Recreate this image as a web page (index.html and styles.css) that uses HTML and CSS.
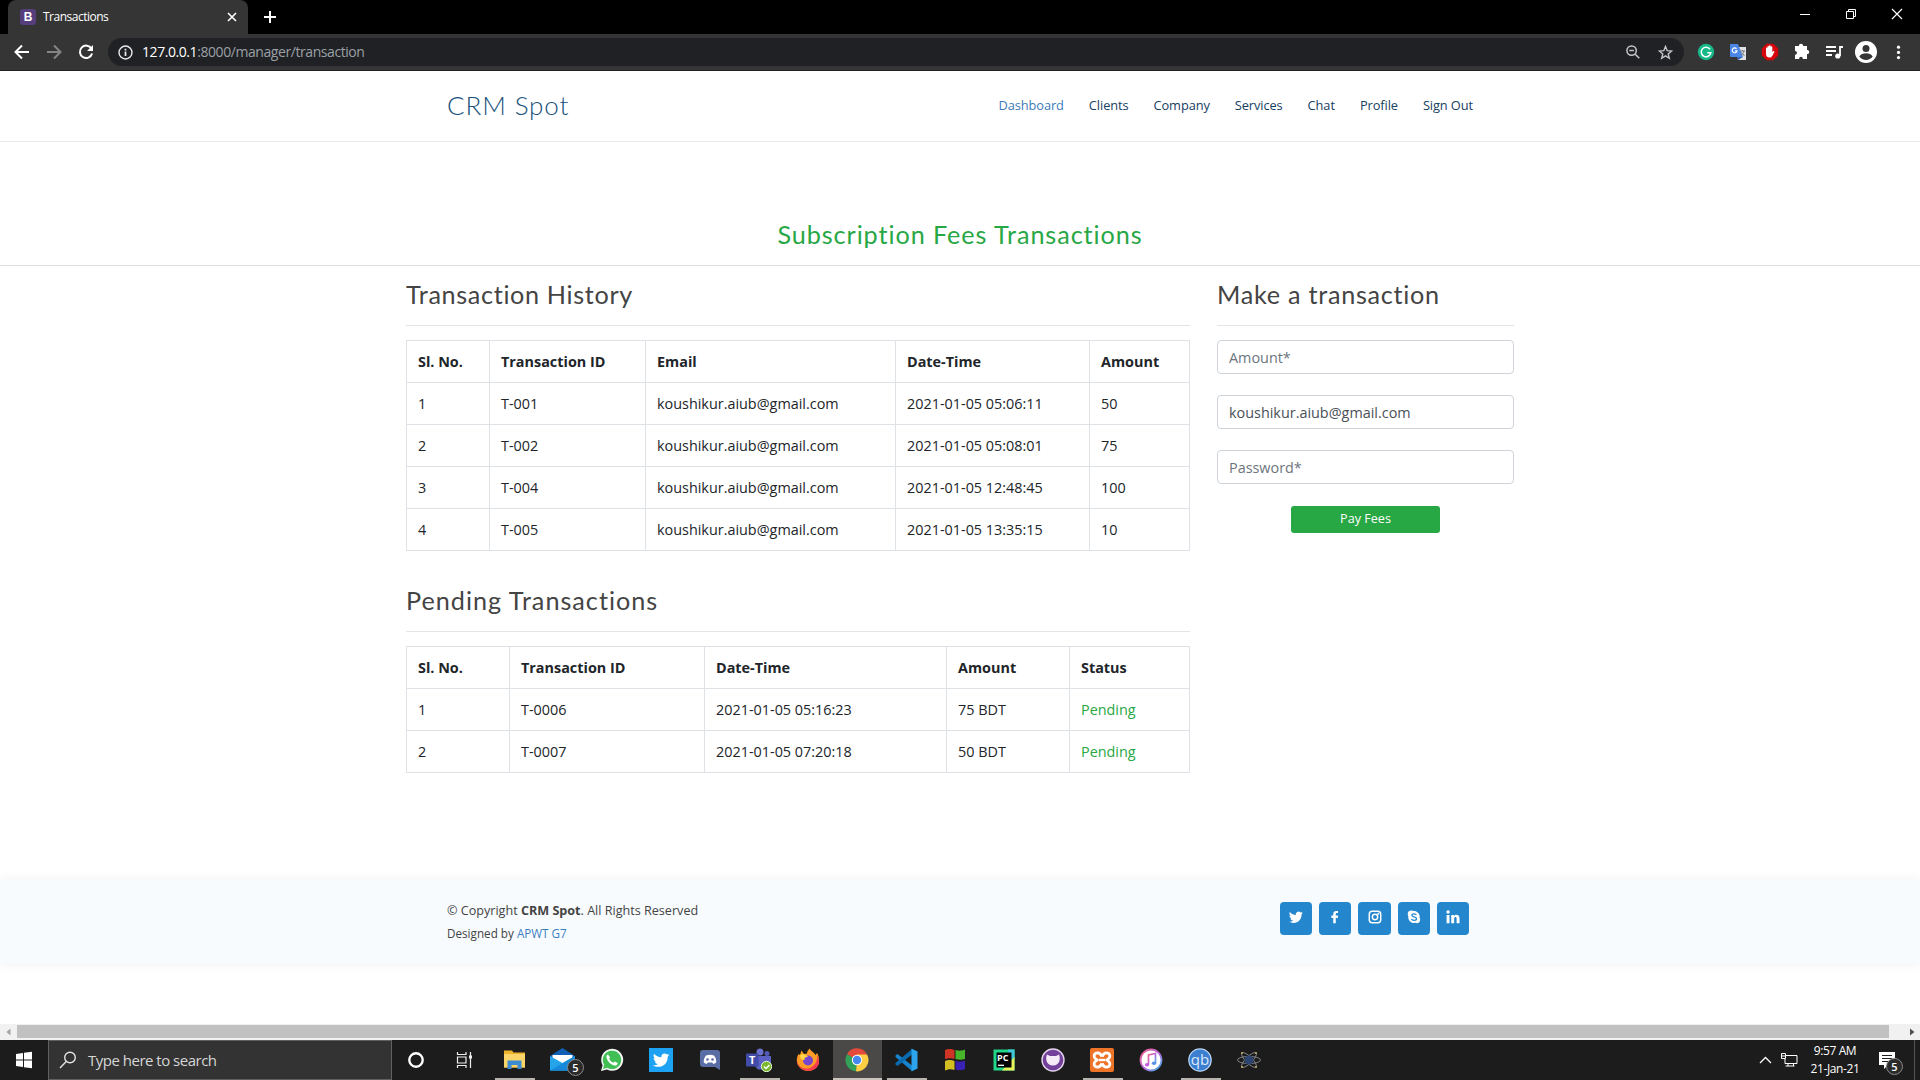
FILE: index.html
```html
<!DOCTYPE html>
<html lang="en">
<head>
<meta charset="utf-8">
<title>Transactions</title>
<link rel="stylesheet" href="styles.css">
</head>
<body>
<div class="tabstrip">
  <div class="tab">
    <span class="favicon">B</span>
    <span class="tab-title">Transactions</span>
    <svg class="tab-close" width="10" height="10" viewBox="0 0 10 10"><path d="M1 1l8 8M9 1l-8 8" stroke="#fff" stroke-width="1.6"/></svg>
  </div>
  <svg class="new-tab" width="14" height="14" viewBox="0 0 14 14"><path d="M7 1v12M1 7h12" stroke="#fff" stroke-width="2"/></svg>
  <div class="window-controls">
    <svg width="12" height="12" viewBox="0 0 12 12"><path d="M1 6.5h10" stroke="#fff"/></svg>
    <svg width="12" height="12" viewBox="0 0 12 12"><path d="M1.5 3.5h7v7h-7zM3.5 3.5v-2h7v7h-2" fill="none" stroke="#fff"/></svg>
    <svg width="12" height="12" viewBox="0 0 12 12"><path d="M1 1l10 10M11 1L1 11" stroke="#fff" stroke-width="1.2"/></svg>
  </div>
</div>
<div class="toolbar">
  <div class="nav-buttons">
    <svg width="16" height="16" viewBox="0 0 16 16"><path d="M15 8H2M8 1.5L1.5 8 8 14.5" fill="none" stroke="#fff" stroke-width="2"/></svg>
    <svg width="16" height="16" viewBox="0 0 16 16"><path d="M1 8h13M8 1.5L14.500 8 8 14.500" fill="none" stroke="#858585" stroke-width="2"/></svg>
    <svg width="16" height="16" viewBox="0 0 16 16"><path d="M13.500 4.700A6.200 6.200 0 1 0 14.100 9.500" fill="none" stroke="#fff" stroke-width="2"/><path d="M15 1v6H9z" fill="#fff"/></svg>
  </div>
  <div class="omnibox">
    <svg class="info" width="15" height="15" viewBox="0 0 15 15"><circle cx="7.500" cy="7.500" r="6.500" fill="none" stroke="#e8eaed" stroke-width="1.400"/><path d="M7.500 6.500v4.500M7.500 3.800v1.700" stroke="#e8eaed" stroke-width="1.700"/></svg>
    <span class="url"><b>127.0.0.1</b>:8000/manager/transaction</span>
    <svg class="zoom" width="14" height="14" viewBox="0 0 14 14"><path d="M9.200 9.200L13.300 13.300M3.300 5.600h4.600" stroke="#c4c6c9" stroke-width="1.500"/><circle cx="5.600" cy="5.600" r="4.700" fill="none" stroke="#c4c6c9" stroke-width="1.500"/></svg>
    <svg width="15" height="15" viewBox="0 0 15 15"><path d="M7.500 1.500l1.700 4.200 4.500.3-3.500 2.900 1.100 4.400-3.800-2.400-3.800 2.400 1.100-4.400L1.300 6l4.500-.3z" fill="none" stroke="#c4c6c9" stroke-width="1.400"/></svg>
  </div>
  <div class="extensions">
    <svg width="32" height="24" viewBox="0 0 32 24"><circle cx="16" cy="12" r="8.200" fill="#15b886"/><path d="M20 9.200A4.800 4.800 0 1 0 20.800 12.800h-3.500" fill="none" stroke="#fff" stroke-width="1.500"/></svg>
    <svg width="32" height="24" viewBox="0 0 32 24"><path d="M14 7h10v13h-8z" fill="#dfe1e5"/><path d="M8 4h8l5 13H9a1 1 0 0 1-1-1z" fill="#4a86e8"/><path d="M16 20l5-3h-6z" fill="#3162b5"/><path d="M14.500 8.800a2.400 2.400 0 1 0 .5 2H13" fill="none" stroke="#fff" stroke-width="1.200"/><path d="M18 11h5M20.500 10v1M22 11c-.5 2-2 4-3.200 4.500M19.500 12.500l3 3.500" stroke="#75797e" fill="none"/></svg>
    <svg width="32" height="24" viewBox="0 0 32 24"><path d="M12.600 3.800h6.800l4.800 4.800v6.800l-4.800 4.800h-6.800l-4.800-4.800V8.600z" fill="#d5060d"/><path d="M12 13.500V8.200c0-1 1.400-1 1.400 0v-1.400c0-1 1.600-1 1.600 0v-.7c0-1 1.700-1 1.700 0v1c0-1 1.600-1 1.600 0v5c1-1.700 2.600-1.400 2-.2-1.700 3.300-2.300 5.600-4.700 5.600-2.600 0-3.600-1.500-3.600-4z" fill="#fff"/></svg>
    <svg width="32" height="24" viewBox="0 0 32 24"><path d="M9 6h4c-.6-3 4.600-3 4 0h4v4c3-.4 3 4.400 0 4v5h-4.200c.3-3-3.900-3-3.600 0H9v-4.300c2.600.3 2.600-4 0-3.700z" fill="#fff"/></svg>
    <svg width="32" height="24" viewBox="0 0 32 24"><path d="M8 7h10M8 11h10M8 15h6M22 16V7h3" fill="none" stroke="#fff" stroke-width="1.800"/><circle cx="19.800" cy="16" r="2.600" fill="#fff"/></svg>
    <svg width="32" height="24" viewBox="0 0 32 24"><circle cx="16" cy="12" r="11" fill="#fff"/><circle cx="16" cy="8.400" r="3.500" fill="#353535"/><path d="M9.300 16.500c2.500-4.300 10.900-4.300 13.400 0-3 4.600-10.400 4.600-13.400 0z" fill="#353535"/></svg>
    <svg width="32" height="24" viewBox="0 0 32 24"><g fill="#fff"><circle cx="16.500" cy="7.200" r="1.600"/><circle cx="16.500" cy="12.400" r="1.600"/><circle cx="16.500" cy="17.600" r="1.600"/></g></svg>
  </div>
</div>

<div class="page">
  <header class="site-header">
    <div class="container">
      <a class="logo">CRM Spot</a>
      <nav class="menu">
        <a class="active">Dashboard</a><a>Clients</a><a>Company</a><a>Services</a><a>Chat</a><a>Profile</a><a>Sign Out</a>
      </nav>
    </div>
  </header>
  <h2 class="page-title">Subscription Fees Transactions</h2>
  <main class="content">
    <div class="lists">
      <section class="block">
        <h3 class="history-title">Transaction History</h3>
        <table class="history">
          <colgroup><col><col><col><col><col></colgroup>
          <tr><th>Sl. No.</th><th>Transaction ID</th><th>Email</th><th>Date-Time</th><th>Amount</th></tr>
          <tr><td>1</td><td>T-001</td><td>koushikur.aiub@gmail.com</td><td>2021-01-05 05:06:11</td><td>50</td></tr>
          <tr><td>2</td><td>T-002</td><td>koushikur.aiub@gmail.com</td><td>2021-01-05 05:08:01</td><td>75</td></tr>
          <tr><td>3</td><td>T-004</td><td>koushikur.aiub@gmail.com</td><td>2021-01-05 12:48:45</td><td>100</td></tr>
          <tr><td>4</td><td>T-005</td><td>koushikur.aiub@gmail.com</td><td>2021-01-05 13:35:15</td><td>10</td></tr>
        </table>
      </section>
      <section class="block">
        <h3 class="pending-title">Pending Transactions</h3>
        <table class="pending">
          <colgroup><col><col><col><col><col></colgroup>
          <tr><th>Sl. No.</th><th>Transaction ID</th><th>Date-Time</th><th>Amount</th><th>Status</th></tr>
          <tr><td>1</td><td>T-0006</td><td>2021-01-05 05:16:23</td><td>75 BDT</td><td class="status">Pending</td></tr>
          <tr><td>2</td><td>T-0007</td><td>2021-01-05 07:20:18</td><td>50 BDT</td><td class="status">Pending</td></tr>
        </table>
      </section>
    </div>
    <form class="pay">
      <h3 class="pay-title">Make a transaction</h3>
      <input type="text" placeholder="Amount*">
      <input type="text" value="koushikur.aiub@gmail.com">
      <input type="password" placeholder="Password*">
      <button type="button">Pay Fees</button>
    </form>
  </main>
  <footer class="footer">
    <div class="container">
      <div class="credits">
        <div class="copyright">© Copyright <strong>CRM Spot</strong>. All Rights Reserved</div>
        <div class="designed">Designed by <a>APWT G7</a></div>
      </div>
      <div class="social">
        <a><svg width="14" height="14" viewBox="0 0 24 24"><path d="M23.600 4.900c-.9.400-1.800.6-2.800.8 1-.6 1.800-1.600 2.100-2.700-.9.600-2 1-3.100 1.200A4.900 4.900 0 0 0 11.500 8.600C7.400 8.400 3.800 6.500 1.400 3.500c-1.300 2.200-.7 5.100 1.500 6.600-.8 0-1.600-.2-2.200-.6 0 2.400 1.600 4.500 3.900 4.900-.7.200-1.500.2-2.200.1.600 2 2.400 3.300 4.600 3.400A9.900 9.900 0 0 1 0 19.900c2.200 1.400 4.700 2.200 7.500 2.200 9.100 0 14.300-7.700 14-14.600.9-.7 1.600-1.600 2.100-2.600z" fill="#fff"/></svg></a>
        <a><svg width="14" height="14" viewBox="0 0 24 24"><path d="M9 22.500v-9H5.800V9.400H9V6.700C9 3.400 11 1.600 13.900 1.600h3.400v3.700h-2.100c-1.500 0-1.900.8-1.900 1.900v2.200h4l-.6 4.100h-3.400v9z" fill="#fff"/></svg></a>
        <a><svg width="14" height="14" viewBox="0 0 24 24"><rect x="2.200" y="2.200" width="19.600" height="19.600" rx="5" fill="none" stroke="#fff" stroke-width="2.500"/><circle cx="12" cy="12" r="4.600" fill="none" stroke="#fff" stroke-width="2.500"/><circle cx="17.700" cy="6.300" r="1.700" fill="#fff"/></svg></a>
        <a><svg width="14" height="14" viewBox="0 0 24 24"><path d="M7 1c2 0 3 .7 4 .7 6.500-.5 11.800 5.500 10.600 11.500 3.200 5-1.800 11.300-7.300 8.700C7 23.300 1.300 17.500 2.300 10.700-.2 6.200 2 1 7 1z" fill="#fff"/><path d="M16 8.600C15 6 8.300 5.800 8.300 9c0 3.500 8 2 8 6 0 3.600-7.600 3.500-8.700.2" fill="none" stroke="#2487ce" stroke-width="2.300"/></svg></a>
        <a><svg width="14" height="14" viewBox="0 0 24 24"><circle cx="3.500" cy="3.500" r="2.900" fill="#fff"/><path d="M1 8.500h5v14H1zM9 8.500h4.700v2c2.300-4 9.500-3.200 9.500 3.500v8.500h-5v-7.300c0-4.300-4.200-4-4.200 0v7.300H9z" fill="#fff"/></svg></a>
      </div>
    </div>
  </footer>
</div>

<div class="hscroll">
  <svg width="17" height="16" viewBox="0 0 17 16"><path d="M10.500 4.500v7L6.500 8z" fill="#a3a3a3"/></svg>
  <div class="thumb"></div>
  <svg width="31" height="16" viewBox="0 0 31 16"><path d="M21 4.500v7l4.500-3.500z" fill="#505050"/></svg>
</div>

<div class="taskbar">
  <div class="start"><svg width="18" height="18" viewBox="0 0 18 18"><path d="M1 3l7-1v6.500H1zM9 1.800l8-1.100v7.800H9zM1 9.500h7V16l-7-1zM9 9.500h8v7.800l-8-1.100z" fill="#fff"/></svg></div>
  <div class="search"><svg width="18" height="18" viewBox="0 0 18 18"><circle cx="11" cy="6.500" r="5.300" fill="none" stroke="#e4e4e4" stroke-width="1.400"/><path d="M7.200 10.500L1 17" stroke="#e4e4e4" stroke-width="1.400"/></svg><span>Type here to search</span></div>
  <div class="apps">
    <div><svg width="24" height="24" viewBox="0 0 24 24"><circle cx="12" cy="12" r="6.700" fill="none" stroke="#fff" stroke-width="2.400"/></svg></div>
    <div><svg width="24" height="24" viewBox="0 0 24 24"><path d="M4.500 4v2.500h8.500V4M4.500 20v-2.500h8.500V20M4.500 9h8.500v6H4.500zM17.500 4v16" fill="none" stroke="#eee" stroke-width="1.200"/><path d="M16 7.500h3v3h-3z" fill="#eee"/></svg></div>
    <div class="open more"><svg width="24" height="24" viewBox="0 0 24 24"><path d="M2 2.500h8l1.500 2H23v15H2z" fill="#eeb32b"/><path d="M2 6h21v13.500H2z" fill="#fbd569"/><path d="M5.500 21v-8.500h14V21h-4v-4h-6v4z" fill="#3d8cd2"/></svg></div>
    <div class="mail"><svg width="26" height="24" viewBox="0 0 26 24"><path d="M0 8L12.500 0 25 8v14.500H0z" fill="#0f5fb4"/><path d="M2.500 7h20v9h-20z" fill="#fff"/><path d="M0 8l12.500 7L25 8v14.500H0z" fill="#26a4ea"/><path d="M0 22.500L25 8v14.500z" fill="#1789d8"/></svg><span class="badge">5</span></div>
    <div><svg width="24" height="24" viewBox="0 0 24 24"><path d="M1 23l1.600-5.800A11 11 0 1 1 7 21.500z" fill="#f1f6f1"/><path d="M3 21l1.200-4.200A9.200 9.200 0 1 1 7.300 19.800z" fill="#41bf55"/><path d="M8 6.500c-1.300.3-1.900 2-1.400 3.400 1.200 3.700 4.200 6.800 8.100 7.600 1.600.2 3-.8 3-2.600l-3-1.500-1.300 1.300c-2-.8-3.400-2.200-4.300-4l1-1.300z" fill="#fff"/></svg></div>
    <div><svg width="24" height="24" viewBox="0 0 24 24"><path d="M0 0h24v24H0z" fill="#1da1f2"/><path d="M20.500 7l-1.800.6 1.400-1.800-2 .7c-2.500-2.300-6.200-.4-5.700 2.800-3 0-5.500-1.400-7.300-3.600-1 1.800-.5 3.700 1 4.700l-1.500-.4c0 1.700 1.100 3 2.600 3.500h-1.500c.5 1.400 1.600 2.200 3.200 2.400-1.600 1.200-3.200 1.600-5.200 1.400 6.500 3.800 15.200.6 15-8.500z" fill="#fff"/></svg></div>
    <div><svg width="22" height="24" viewBox="0 0 22 24"><path d="M4 2h14a3 3 0 0 1 3 3v17l-5-3H4a3 3 0 0 1-3-3V5a3 3 0 0 1 3-3z" fill="#5a6da5"/><path d="M7 7.500c2.600-1 5.400-1 8 0 1.800 2.300 2.500 4.600 2.200 7-1 .8-2 1.200-3 1.400l-.9-1.400h-4.600l-.9 1.400c-1-.2-2-.6-3-1.400-.3-2.400.4-4.700 2.200-7z" fill="#fff"/><circle cx="8.500" cy="11.500" r="1.300" fill="#5a6da5"/><circle cx="13.500" cy="11.500" r="1.300" fill="#5a6da5"/></svg></div>
    <div class="open"><svg width="26" height="24" viewBox="0 0 26 24"><circle cx="14" cy="4" r="3.500" fill="#6b72d0"/><circle cx="21" cy="5.500" r="2.500" fill="#5359b8"/><path d="M9 8h16v8a6 6 0 0 1-7 5.500H12a6 6 0 0 1-3-5z" fill="#5b62c4"/><rect x="0" y="5.500" width="12.500" height="13" rx="1" fill="#414ba8"/><text x="3" y="16" class="glyph-t">T</text><circle cx="20.500" cy="18.500" r="5.200" fill="#7cb82f" stroke="#e9f4dc"/><path d="M18 18.500l2 2 3.500-3.500" fill="none" stroke="#fff" stroke-width="1.500"/></svg></div>
    <div><svg width="24" height="24" viewBox="0 0 24 24"><path d="M2.500 6l1.500 1L5.500 2.500 8 6l3-.5C11 2.500 14 .5 14 .5 14 3 18 4 19.500 7l1.500-2c3 5 2.600 10.500-.3 14-4.200 5-12.500 5.300-17 .5C-.2 15.200.3 10.300 2.500 6z" fill="#ff9c25"/><path d="M1 11.500c.2 7.800 8 10.800 13.500 8.200 5-2.400 7.300-7.300 6.500-12.700 3 5 2.600 9.500-.3 12.500-4.200 4.600-12.500 4.500-17-.2C1.500 17 .7 14.500 1 11.500z" fill="#f83b4d"/><circle cx="12" cy="12.500" r="5" fill="#7646cf"/><path d="M4 7c3-1.500 6-1 8 2-3 0-4.500 1.500-3 3-3.500 0-5-2-5-5z" fill="#ffd744"/></svg></div>
    <div class="open current"><svg width="24" height="24" viewBox="0 0 24 24"><path d="M12 12L2 6.300A11.300 11.300 0 0 1 22 6.500z" fill="#e24a3b"/><path d="M12 12L2 6.300A11.300 11.300 0 0 0 11 23.300z" fill="#33a157"/><path d="M12 12l-1 11.300A11.300 11.300 0 0 0 22 6.500H12z" fill="#ffce42"/><circle cx="12" cy="12" r="5.200" fill="#fff"/><circle cx="12" cy="12" r="4.200" fill="#4688f1"/></svg></div>
    <div class="open more"><svg width="24" height="24" viewBox="0 0 24 24"><path d="M1.500 7.500l2-1.500L18 17.500V23L1.500 9z" fill="#1684cf"/><path d="M1.500 16.500l2 1.500L18 6.500V1L1.500 15z" fill="#0b6bb0"/><path d="M17.500.500L23.500 3.500v17l-6 3z" fill="#2da3ec"/></svg></div>
    <div><svg width="24" height="24" viewBox="0 0 24 24"><path d="M2 2c4-1.500 6-1 9.500 0v9C8 10 6 10 2 11z" fill="#cf3425"/><path d="M12.500 2c3.500 1 6 1 9.500-.5V11c-3.500 1-6 1-9.500 0z" fill="#47b62b"/><path d="M2 13c4-1.500 6-1 9.500 0v9C8 21 6 21 2 22.500z" fill="#d4bf23"/><path d="M12.500 13c3.500 1 6 1 9.500-.5V21c-3.500 1.500-6 1.500-9.500.5z" fill="#3922b5"/></svg></div>
    <div><svg width="24" height="24" viewBox="0 0 24 24"><path d="M1.500 1.500h21v21h-21z" fill="#21d789"/><path d="M16 1.500h6.500V10l-6.500 4z" fill="#42c7d8"/><path d="M22.500 9v13.500H10z" fill="#e8f05a"/><path d="M4.500 4.500h15v15h-15z" fill="#000"/><text x="5" y="12.500" class="glyph-pc">PC</text><path d="M6 17.300h6" stroke="#fff" stroke-width="1.300"/></svg></div>
    <div><svg width="24" height="24" viewBox="0 0 24 24"><circle cx="12" cy="12" r="11" fill="#73409a" stroke="#e4d4ec" stroke-width="1.400"/><path d="M6 6.500l3 1.600h6l3-1.600c1.700 4 1 11-6 11s-7.700-7-6-11z" fill="#f5ecf8"/></svg></div>
    <div class="open"><svg width="24" height="24" viewBox="0 0 24 24"><rect width="24" height="24" rx="2" fill="#ee742a"/><g fill="none" stroke="#fff" stroke-width="2.800"><path d="M12 8.500C9 2.500 2.500 5 4.500 9.500 5.200 11 7 11.300 7 12s-1.800 1-2.500 2.500C2.500 19 9 21.500 12 15.500"/><path d="M12 8.500C15 2.500 21.500 5 19.500 9.500 18.800 11 17 11.300 17 12s1.800 1 2.500 2.500C21.500 19 15 21.500 12 15.500"/><path d="M8.500 12h7" stroke-width="2.400"/></g></svg></div>
    <div><svg width="24" height="24" viewBox="0 0 24 24"><defs><linearGradient id="note" x2="1" y2="1"><stop stop-color="#f35b8a"/><stop offset=".55" stop-color="#b56ddc"/><stop offset="1" stop-color="#35b9ee"/></linearGradient></defs><circle cx="12" cy="12" r="10.500" fill="#fff" stroke="url(#note)" stroke-width="1.800"/><path d="M9.500 16.500V7l7-1.500V15" fill="none" stroke="url(#note)" stroke-width="1.700"/><ellipse cx="8" cy="16.700" rx="2.200" ry="1.800" fill="#c55edb"/><ellipse cx="15" cy="15.200" rx="2.200" ry="1.800" fill="#5a91e8"/></svg></div>
    <div class="open"><svg width="24" height="24" viewBox="0 0 24 24"><circle cx="12" cy="12" r="11.200" fill="#3c7ed0" stroke="#b9d5f5" stroke-width="1.200"/><text x="12" y="16.500" class="glyph-qb">qb</text></svg></div>
    <div><svg width="24" height="24" viewBox="0 0 24 24"><g fill="none" stroke="#8a8f92" stroke-width=".9"><ellipse cx="12" cy="12" rx="11.500" ry="3.600"/><ellipse cx="12" cy="12" rx="10" ry="3.200" transform="rotate(45 12 12)"/><ellipse cx="12" cy="12" rx="10" ry="3.200" transform="rotate(-45 12 12)"/></g><circle cx="12" cy="12" r="4.600" fill="#2c446f"/><g fill="#c8b460"><circle cx="5" cy="5" r="1"/><circle cx="19" cy="5" r="1"/><circle cx="5" cy="19" r="1"/><circle cx="19" cy="19" r="1"/></g></svg></div>
  </div>
  <div class="tray">
    <svg width="13" height="8" viewBox="0 0 13 8"><path d="M1 7l5.500-5.500L12 7" fill="none" stroke="#fff" stroke-width="1.300"/></svg>
    <svg width="17" height="14" viewBox="0 0 17 14"><path d="M5 2.500h11v8H4V6M7 10.500v2.500M12.500 10.500v2.500M4.500 13h9M.5.500h4v5h-4zM.5 3h4" fill="none" stroke="#fff"/></svg>
    <div class="clock"><span>9:57 AM</span><span>21-Jan-21</span></div>
    <div class="notify"><svg width="18" height="18" viewBox="0 0 18 18"><path d="M0 0h16v13h-7l-4 4v-4H0z" fill="#fff"/><path d="M3 3.500h10M3 6.500h10M3 9.500h7" stroke="#1c1c1c"/></svg><span class="badge">5</span></div>
  </div>
</div>
</body>
</html>
```
FILE: styles.css
```css
* { box-sizing: border-box; }
body {
  margin: 0;
  width: 1920px;
  height: 1080px;
  overflow: hidden;
  display: flex;
  flex-direction: column;
  font-family: "Open Sans", sans-serif;
  font-size: 14.4px;
  color: #444;
  background: #fff;
}
svg { display: block; flex: none; }
h2, h3 { margin: 0; font-family: Lato, sans-serif; font-weight: 400; }

/* Browser chrome */
.tabstrip { height: 34px; background: #000; display: flex; align-items: center; padding-left: 8px; flex: none; }
.tab { width: 240px; height: 34px; background: #353535; border-radius: 8px 8px 0 0; display: flex; align-items: center; padding: 0 11px 0 12px; }
.favicon { width: 16px; height: 16px; border-radius: 3px; background: #563d7c; color: #fff; font: bold 12px/16px "Liberation Sans", sans-serif; text-align: center; }
.tab-title { flex: 1; margin-left: 7px; padding-bottom: 1px; font-size: 12px; letter-spacing: -0.5px; color: #fff; }
.new-tab { margin-left: 15px; }
.window-controls { margin-left: auto; display: flex; gap: 34px; padding: 0 17px 6px 0; }
.toolbar { height: 37px; flex: none; background: #353535; border-bottom: 1px solid #222; display: flex; align-items: center; padding-left: 14px; }
.nav-buttons { display: flex; gap: 16px; }
.omnibox { width: 1576px; height: 28px; margin-left: 14px; border-radius: 14px; background: #202124; display: flex; align-items: center; padding: 0 11px 0 10px; }
.url { flex: 1; margin-left: 9px; padding-bottom: 1px; font-size: 14px; letter-spacing: -0.430px; color: #9aa0a6; }
.url b { font-weight: 400; color: #fff; }
.zoom { margin-right: 18px; }
.extensions { display: flex; margin-left: 6px; }

/* Page */
.page { height: 953px; flex: none; display: flex; flex-direction: column; }
.container { width: 1026px; margin: 0 auto; display: flex; justify-content: space-between; }
.site-header { height: 71px; border-bottom: 1px solid #eaeaea; flex: none; }
.logo { font: 300 26px/69px Lato, sans-serif; letter-spacing: 0.900px; color: #16507b; }
.menu { display: flex; gap: 25px; font-size: 12.800px; line-height: 69px; letter-spacing: -0.080px; color: #16405f; }
.active { color: #3d7ab8; }
.page-title { height: 124px; padding-top: 76px; border-bottom: 1px solid #dcdcdc; text-align: center; font-size: 25.200px; line-height: 32px; color: #28a745; letter-spacing: 0.930px; flex: none; }
.content { display: flex; gap: 27px; width: 1108px; margin: 0 auto; height: 613px; flex: none; }
.lists { width: 784px; }
.block { height: 306px; }
.content h3 { height: 60px; padding-top: 12px; margin-bottom: 14px; border-bottom: 1px solid #e4e4e4; font-size: 25.200px; line-height: 32px; color: #444; letter-spacing: 0.660px; }
.content .pending-title { letter-spacing: 1px; }
.content .pay-title { letter-spacing: 0.730px; }
table { width: 784px; table-layout: fixed; border-collapse: collapse; color: #212529; }
tr { height: 42px; }
th, td { padding: 0 10px 0 11px; border: 1px solid #dee2e6; text-align: left; line-height: 21px; }
th { font-weight: 700; }
.history col:nth-child(1) { width: 83px; }
.history col:nth-child(2) { width: 156px; }
.history col:nth-child(3) { width: 250px; }
.history col:nth-child(4) { width: 194px; }
.pending col:nth-child(1) { width: 103px; }
.pending col:nth-child(2) { width: 195px; }
.pending col:nth-child(3) { width: 242px; }
.pending col:nth-child(4) { width: 123px; }
.status { color: #28a745; }
.pay { width: 297px; display: flex; flex-direction: column; }
.pay input { height: 34px; margin-bottom: 21px; padding: 0 11px; border: 1px solid #ced4da; border-radius: 4px; font: 14.400px "Open Sans", sans-serif; color: #495057; }
.pay input::placeholder { color: #6c757d; opacity: 1; }
.pay button { width: 149px; height: 27px; margin: 1px auto 0; padding: 0 0 2px; border: 0; border-radius: 3px; background: #28a745; color: #fff; font: 12.600px "Open Sans", sans-serif; }
.footer { height: 84px; margin-top: 1px; background: #f7fbfe; box-shadow: 0 0 12px rgba(0, 30, 60, 0.06); flex: none; }
.credits { padding-top: 20px; font-size: 12.600px; line-height: 22px; }
.designed { font-size: 11.700px; line-height: 23px; }
.designed a { color: #3c7fc1; }
.social { display: flex; gap: 7px; padding: 22px 4px 0 0; }
.social a { width: 32.200px; height: 33px; border-radius: 4px; background: #2487ce; display: flex; justify-content: center; padding-top: 8px; }

/* Horizontal scrollbar */
.hscroll { height: 16px; background: #f1f1f1; display: flex; flex: none; }
.thumb { flex: 1; height: 13px; margin-top: 1px; background: #c1c1c1; }

/* Taskbar */
.taskbar { height: 40px; background: #1c1c1c; display: flex; flex: none; color: #fff; }
.start { width: 48px; display: flex; align-items: center; justify-content: center; }
.search { width: 344px; background: #333; border: 1px solid #606060; display: flex; align-items: center; padding-left: 10px; color: #d6d6d6; font-size: 15px; letter-spacing: -0.500px; }
.search span { margin-left: 11px; }
.apps { display: flex; }
.apps > div { width: 49px; display: flex; align-items: center; justify-content: center; position: relative; }
.apps > div svg { margin-right: 1px; }
.apps .open { background: linear-gradient(#b8b4ae, #b8b4ae) center bottom / 40px 2px no-repeat; }
.apps .current { background: linear-gradient(#c9c4bc, #c9c4bc) center bottom / 100% 2px no-repeat, #4b4947; }
.badge { position: absolute; width: 17px; height: 17px; border-radius: 50%; border: 1px solid #8a8a8a; background: #2b2b2b; color: #fff; font-size: 11px; font-weight: 600; line-height: 15px; text-align: center; }
.mail .badge { left: 28px; top: 19px; }
.glyph-t { font: bold 11px "Open Sans", sans-serif; fill: #fff; }
.glyph-pc { font: bold 9px "Open Sans", sans-serif; fill: #fff; }
.glyph-qb { font: 15px "Open Sans", sans-serif; fill: #dceafa; text-anchor: middle; }
.tray { margin-left: auto; display: flex; align-items: center; }
.tray > svg + svg { margin-left: 9px; }
.clock { width: 74px; display: flex; flex-direction: column; align-items: center; font-size: 12px; line-height: 18px; letter-spacing: -0.400px; }
.notify { width: 43px; height: 40px; padding: 12px 0 0 7px; border-right: 1px solid #555; margin-right: 5px; position: relative; }
.notify .badge { left: 14px; top: 18px; }
```
